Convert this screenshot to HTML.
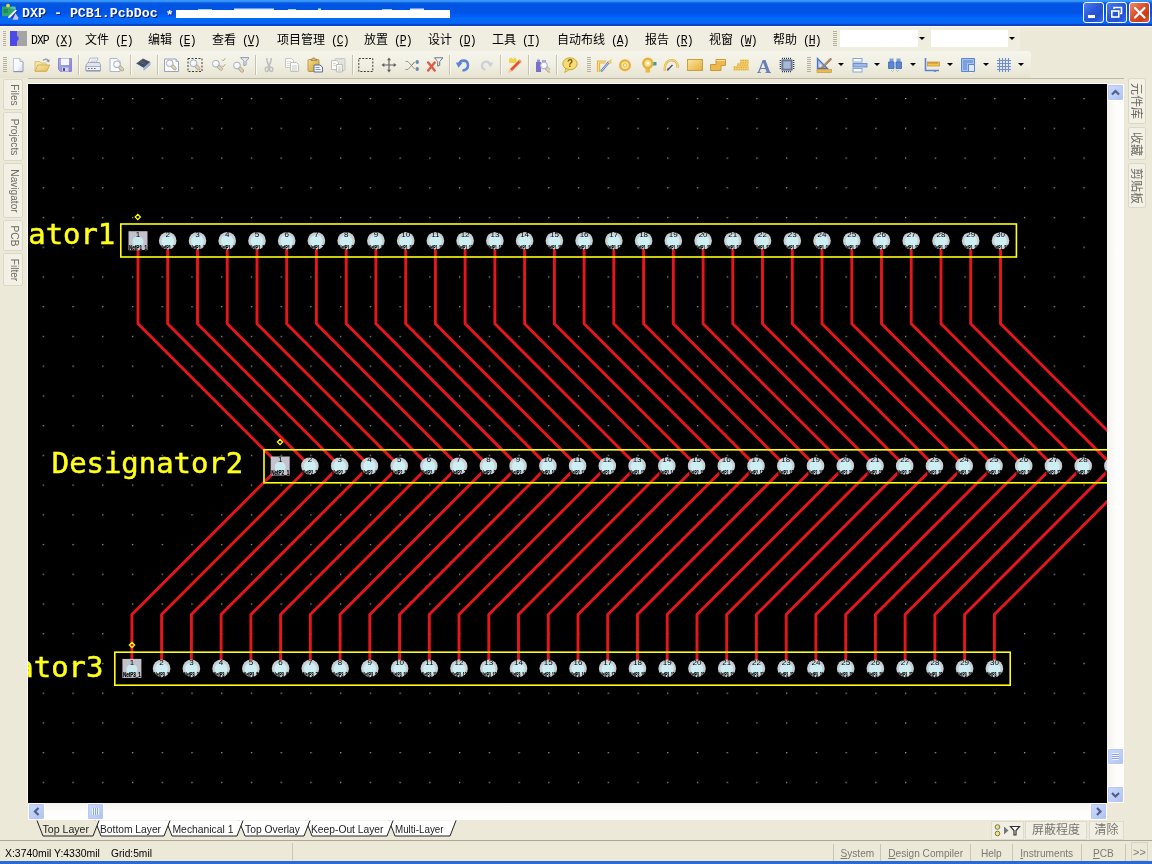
<!DOCTYPE html>
<html lang="zh-CN">
<head>
<meta charset="utf-8">
<title>DXP - PCB1.PcbDoc</title>
<style>
html,body{margin:0;padding:0;}
body{will-change:transform;width:1152px;height:864px;overflow:hidden;background:#ece9d8;position:relative;font-family:"Liberation Sans","Noto Sans CJK SC",sans-serif;font-size:11px;color:#000;}
.abs{position:absolute;}
#title{left:0;top:0;width:1152px;height:26px;background:linear-gradient(180deg,#3c9cff 0,#2f8cf8 1.5px,#0e5fda 2.8px,#0054e3 4.5px,#0055e6 13px,#0060fa 16.5px,#066af8 18.5px,#0467f8 23.3px,#0b46c6 24.5px,#0a3cb8 26px);}
#ttext{left:22px;top:5px;height:18px;line-height:18px;color:#fff;font:bold 13.3px/18px "Liberation Mono","Noto Sans CJK SC",monospace;letter-spacing:0;text-shadow:1px 1px 0 #0a1f6e;white-space:pre;}
#redact{left:176px;top:9.5px;width:274px;height:8.5px;background:#fff;}
.wb{top:2px;width:19px;height:19px;border:1px solid #fff;border-radius:3px;background:linear-gradient(135deg,#4b7ff0 0,#2a59d8 45%,#2350d0 70%,#3a6cf0 100%);}
#wclose{background:linear-gradient(135deg,#ee8a6c 0,#d9502c 45%,#c83c14 75%,#e2633c 100%);}
#menubar{left:0;top:27px;width:1020px;border-radius:0 3px 3px 0;height:24px;background:#f0eee1;}
#tb{left:0;top:51px;width:1031px;border-radius:0 3px 3px 0;height:27px;background:linear-gradient(180deg,#f6f5ec 0,#f1efe2 50%,#e6e3d1 100%);}
.mi{top:33px;height:15px;line-height:15px;font:12px/15px "Liberation Mono","Noto Sans CJK SC",monospace;white-space:pre;color:#000;}
.mi b{font-weight:normal;font-size:11.5px;letter-spacing:-1px;display:inline-block;transform:scaleY(1.14);transform-origin:50% 78%;}
.mi u{text-decoration:underline;}
.grip{width:4px;background:repeating-linear-gradient(180deg,#b4b09c 0,#b4b09c 1px,transparent 1px,transparent 2px);}
.sep{top:55px;width:1px;height:20px;background:#c5c2b0;border-right:1px solid #fbfaf5;}
.ico{top:57px;width:16px;height:16px;}
.dd{top:63px;width:0;height:0;border-left:3px solid transparent;border-right:3px solid transparent;border-top:3px solid #000;}
.combo{top:30px;height:17px;background:#fff;}
.cbtn{top:30px;width:9px;height:17px;background:#efede0;}
.ltab,.rtab{background:#f3f1e6;border:1px solid #dcd8c6;border-radius:2px;color:#6c6a62;}
.vt{position:absolute;left:50%;top:50%;white-space:nowrap;transform:translate(-50%,-50%) rotate(90deg) scaleX(.92);font-size:11px;}
.tx{display:inline-block;transform:scaleX(.92);transform-origin:0 50%;}
.sp .tx{transform-origin:50% 50%;}
.rtab .vt{font-size:12px;transform:translate(-50%,-50%) rotate(90deg);}
#vs{left:1107px;top:84px;width:17px;height:719px;background:linear-gradient(90deg,#f3f1ec 0,#fdfdfb 50%,#fefefe 100%);}
#hs{left:28px;top:803px;width:1079px;height:17px;background:linear-gradient(180deg,#f3f1ec 0,#fdfdfb 50%,#fefefe 100%);}
.sbtn{width:15px;height:15px;border:1px solid #fff;border-radius:2px;background:linear-gradient(135deg,#cbd9fb 0,#bccdf7 60%,#aebff0 100%);box-shadow:0 0 0 1px #b7c8f4 inset;}
#tabs{left:28px;top:820px;}
#status{left:0;top:840px;width:1152px;height:21px;border-top:1px solid #aca899;background:#ece9d8;}
#bline{left:0;top:861px;width:1152px;height:3px;background:#2a6ad8;}
.st{top:846px;height:14px;line-height:14px;font-size:11px;white-space:pre;}
.sp{top:844px;height:17px;line-height:18px;font-size:11px;color:#7b7972;text-align:center;border-left:1px solid #c9c6b6;}
.sp u{text-decoration:underline;}
.bb{top:821px;height:17px;line-height:17px;background:#f1efe4;border:1px solid #dedbca;color:#77756c;font-size:12px;text-align:center;}
#pcb text.pn{font:8px "Liberation Sans",sans-serif;fill:#000;text-anchor:middle;}
#pcb text.nn{font:bold 7px "Liberation Sans",sans-serif;fill:#000;stroke:#000;stroke-width:.2px;text-anchor:middle;}
#pcb .des text{font:28.9px "DejaVu Sans Mono","Liberation Mono",monospace;fill:#ffff1a;stroke:#ffff1a;stroke-width:.5px;}
</style>
</head>
<body>
<svg width="0" height="0" style="position:absolute"><defs><radialGradient id="gl" cx=".4" cy=".35" r=".75"><stop offset="0" stop-color="#ffffff"/><stop offset=".6" stop-color="#f1f3fa"/><stop offset="1" stop-color="#c4cade"/></radialGradient></defs></svg>
<div id="title" class="abs"></div>
<svg class="abs" style="left:0;top:3px" width="20" height="18" viewBox="0 3 20 18"><path d="M2 6.5h13.6v3.5l-6 6.2H2z" fill="#2fa66a"/><rect x="3.5" y="9" width="4.5" height="4" fill="#1f8a58"/><path d="M9 8l4-1.5 2.6 1v2z" fill="#5cc0c8"/><circle cx="8" cy="5.6" r="1.9" fill="#e6d83a"/><path d="M15.6 9.6l1.4 1.2-6.8 7-2.2.4.6-2z" fill="#f4f6fb"/><path d="M16.8 11l.9.8-5.6 6.2-1.3-.6z" fill="#2238a8"/><path d="M15.4 13.3l2.8 4v2.4h-5.6z" fill="#c9c2ea"/></svg>
<div id="ttext" class="abs">DXP - PCB1.PcbDoc <span style="position:relative;top:2px">*</span></div>
<div id="redact" class="abs"></div>
<svg class="abs" style="left:196px;top:8px" width="260" height="3" viewBox="0 0 260 3"><g fill="#fff" fill-opacity=".85"><rect x="2" y="1.2" width="14" height="2"/><rect x="38" y=".5" width="40" height="3"/><rect x="92" y="1.2" width="8" height="2"/><rect x="122" y=".5" width="3" height="3"/><rect x="186" y="1.2" width="10" height="2"/><rect x="214" y=".5" width="14" height="3"/></g></svg>
<div class="abs wb" style="left:1083px"><div class="abs" style="left:4px;top:12px;width:7px;height:3px;background:#fff"></div></div>
<div class="abs wb" style="left:1106px"><svg width="19" height="19" viewBox="0 0 19 19" style="position:absolute;left:0;top:0"><path d="M7 6V4.5h7.5v6H13" fill="none" stroke="#fff" stroke-width="1.6"/><rect x="4.8" y="8" width="7" height="6" fill="none" stroke="#fff" stroke-width="1.6"/></svg></div>
<div id="wclose" class="abs wb" style="left:1129px"><svg width="19" height="19" viewBox="0 0 19 19" style="position:absolute;left:0;top:0"><path d="M5 5l9.5 9.5M14.5 5L5 14.5" stroke="#fff" stroke-width="2.2" stroke-linecap="round"/></svg></div>
<div class="abs" style="left:0;top:26px;width:1152px;height:1px;background:#fbfaf6"></div>
<div id="menubar" class="abs"></div>
<div id="tb" class="abs"></div>
<div class="abs grip" style="left:3px;top:31px;height:15px;width:3px"></div>
<svg class="abs" style="left:10px;top:31px" width="17" height="15" viewBox="0 0 17 15"><rect x="7" y="0" width="10" height="15" fill="#a4a4a4"/><path d="M0 0h7v4.8a3 3 0 0 1 0 5.4V15H0z" fill="#4a4ae6"/></svg>
<div class="abs mi" style="left:31px"><b>DXP (<u>X</u>)</b></div>
<div class="abs mi" style="left:85px">文件<b> (<u>F</u>)</b></div>
<div class="abs mi" style="left:148px">编辑<b> (<u>E</u>)</b></div>
<div class="abs mi" style="left:212px">查看<b> (<u>V</u>)</b></div>
<div class="abs mi" style="left:277px">项目管理<b> (<u>C</u>)</b></div>
<div class="abs mi" style="left:364px">放置<b> (<u>P</u>)</b></div>
<div class="abs mi" style="left:428px">设计<b> (<u>D</u>)</b></div>
<div class="abs mi" style="left:492px">工具<b> (<u>T</u>)</b></div>
<div class="abs mi" style="left:557px">自动布线<b> (<u>A</u>)</b></div>
<div class="abs mi" style="left:645px">报告<b> (<u>R</u>)</b></div>
<div class="abs mi" style="left:709px">视窗<b> (<u>W</u>)</b></div>
<div class="abs mi" style="left:773px">帮助<b> (<u>H</u>)</b></div>
<div class="abs grip" style="left:833px;top:31px;height:15px"></div>
<div class="abs combo" style="left:840px;width:87px"></div><div class="abs cbtn" style="left:918px"></div><div class="abs dd" style="left:919px;top:37px"></div>
<div class="abs combo" style="left:931px;width:86px"></div><div class="abs cbtn" style="left:1008px"></div><div class="abs dd" style="left:1009px;top:37px"></div>
<div class="abs grip" style="left:3px;top:57px;height:15px"></div>
<svg class="abs ico" style="left:10.5px" width="16" height="16" viewBox="0 0 16 16"><defs><linearGradient id="gn" x1="0" y1="0" x2="1" y2="1"><stop offset="0" stop-color="#ffffff"/><stop offset=".6" stop-color="#f4f6fc"/><stop offset="1" stop-color="#c9cfe6"/></linearGradient></defs><path d="M2.5 1.5h6.5l3 3v10h-9.5z" fill="url(#gn)" stroke="#c2c7d8" stroke-width="1"/><path d="M9 1.5v3h3" fill="#e6e9f4" stroke="#aeb4ca" stroke-width="1"/><path d="M2.5 14.6h9.5" stroke="#8d91a6" stroke-width="1.2"/><path d="M12.1 5v9.5" stroke="#aab0c6" stroke-width="1"/></svg>
<svg class="abs ico" style="left:34px" width="16" height="16" viewBox="0 0 16 16"><defs><linearGradient id="go" x1="0" y1="0" x2="1" y2="1"><stop offset="0" stop-color="#f9e9a8"/><stop offset="1" stop-color="#e6bb52"/></linearGradient></defs><path d="M1 4.5h5l1.2 1.5H12v8H1z" fill="#f4e2a6" stroke="#dcc27a" stroke-width="1"/><path d="M1 14.3L3.8 8h12L12.7 14.3z" fill="url(#go)" stroke="#c9a548" stroke-width=".8"/><path d="M9 3.4c2-2 4.5-1.6 5.4.6" fill="none" stroke="#8593b6" stroke-width="1.4"/><path d="M15.8 2.2l-.8 3.4-2.8-1.7z" fill="#8593b6"/></svg>
<svg class="abs ico" style="left:57px" width="16" height="16" viewBox="0 0 16 16"><defs><linearGradient id="gs" x1="0" y1="0" x2="1" y2="1"><stop offset="0" stop-color="#b4b2ec"/><stop offset="1" stop-color="#8482cc"/></linearGradient></defs><path d="M1.5 1.5h13v13h-11l-2-2z" fill="url(#gs)" stroke="#8a88d0" stroke-width="1"/><rect x="4" y="1.5" width="8" height="6.5" fill="#f6f6fd"/><rect x="5" y="10.5" width="6.5" height="4" fill="#d4d4f0"/><rect x="6" y="11.2" width="2" height="2.6" fill="#3c3c70"/></svg>
<div class="abs sep" style="left:78px"></div>
<svg class="abs ico" style="left:84.5px" width="16" height="16" viewBox="0 0 16 16"><path d="M5 1h8l-2 5H3z" fill="#fdfdff" stroke="#a9afc2" stroke-width=".9"/><path d="M6 3h5M5.5 4.5h5" stroke="#b9bfd2" stroke-width=".7"/><path d="M1 8l2-2.5h11.5l1 2.5v5.5H1z" fill="#dfe4f0" stroke="#9aa1b6" stroke-width=".9"/><rect x="1" y="9.5" width="14.5" height="4" fill="#eef1f8" stroke="#9aa1b6" stroke-width=".8"/><path d="M3 11.5h1.5M6 11.5h1.5M9 11.5h1.5" stroke="#5d647a" stroke-width="1.2"/><path d="M1 14h14.5" stroke="#858ba0" stroke-width="1"/></svg>
<svg class="abs ico" style="left:108px" width="16" height="16" viewBox="0 0 16 16"><path d="M2 1.5h7l3 3v10h-10z" fill="#fbfcff" stroke="#aeb4c8" stroke-width="1"/><path d="M11.72 10.02l2.4 2.4" stroke="#a3957a" stroke-width="3.6" stroke-linecap="round"/><path d="M11.72 10.02l2.4 2.4" stroke="#e2d2ae" stroke-width="2.4" stroke-linecap="round"/><circle cx="9" cy="7.3" r="3.4" fill="url(#gl)" stroke="#a9afc2" stroke-width="1"/></svg>
<div class="abs sep" style="left:130px"></div>
<svg class="abs ico" style="left:135px" width="16" height="16" viewBox="0 0 16 16"><path d="M1 6.5l7-5 7.5 3.5-7 6z" fill="#4c5768"/><path d="M3.5 6.3L8 3l5 2.3L8.5 9z" fill="#3a4454"/><path d="M5 5.2l4.5 2.3M6.5 4.2l4.5 2.2" stroke="#7c8798" stroke-width=".6"/><path d="M1 6.5l7.5 4.5v3l-7.5-4.5z" fill="#e2e9f4"/><path d="M8.5 11l7-6v3l-7 6z" fill="#9fb0cc"/></svg>
<div class="abs sep" style="left:157px"></div>
<svg class="abs ico" style="left:164px" width="16" height="16" viewBox="0 0 16 16"><path d="M.5 2h11.5l2.5 2.5v10h-14z" fill="#fbfcff" stroke="#9aa1b8" stroke-width="1"/><path d="M12 2v2.5h2.5" fill="#dfe3f1" stroke="#9aa1b8" stroke-width=".8"/><path d="M8.42 9.02l2.4 2.4" stroke="#a3957a" stroke-width="3.6" stroke-linecap="round"/><path d="M8.42 9.02l2.4 2.4" stroke="#e2d2ae" stroke-width="2.4" stroke-linecap="round"/><circle cx="5.7" cy="6.3" r="3.4" fill="url(#gl)" stroke="#a9afc2" stroke-width="1"/></svg>
<svg class="abs ico" style="left:186.7px" width="16" height="16" viewBox="0 0 16 16"><rect x="1" y="1.5" width="14" height="13" fill="none" stroke="#3a3a3a" stroke-width="1" stroke-dasharray="2 1.5"/><path d="M9.22 9.02l2.4 2.4" stroke="#a3957a" stroke-width="3.6" stroke-linecap="round"/><path d="M9.22 9.02l2.4 2.4" stroke="#e2d2ae" stroke-width="2.4" stroke-linecap="round"/><circle cx="6.5" cy="6.3" r="3.4" fill="url(#gl)" stroke="#a9afc2" stroke-width="1"/></svg>
<svg class="abs ico" style="left:210.8px" width="16" height="16" viewBox="0 0 16 16"><path d="M7.620000000000001 9.42l2.4 2.4" stroke="#a3957a" stroke-width="3.6" stroke-linecap="round"/><path d="M7.620000000000001 9.42l2.4 2.4" stroke="#e2d2ae" stroke-width="2.4" stroke-linecap="round"/><circle cx="4.9" cy="6.7" r="3.4" fill="url(#gl)" stroke="#a9afc2" stroke-width="1"/><path d="M11 2.5l1.2 1.4 2.3-2.8M11 8.5l1.2 1.4 2.3-2.8" fill="none" stroke="#a9ab9c" stroke-width="1"/></svg>
<svg class="abs ico" style="left:233px" width="16" height="16" viewBox="0 0 16 16"><path d="M6.720000000000001 11.22l2.4 2.4" stroke="#a3957a" stroke-width="3.6" stroke-linecap="round"/><path d="M6.720000000000001 11.22l2.4 2.4" stroke="#e2d2ae" stroke-width="2.4" stroke-linecap="round"/><circle cx="4" cy="8.5" r="3.4" fill="url(#gl)" stroke="#a9afc2" stroke-width="1"/><path d="M7.5 .600h9l-3.4 3.6v3.6l-2.2.8v-4.4z" fill="#e4e8f2" stroke="#8a90a4" stroke-width=".9"/></svg>
<div class="abs sep" style="left:255px"></div>
<svg class="abs ico" style="left:260.7px" width="16" height="16" viewBox="0 0 16 16"><path d="M5.8 1c-.3 3 1 6 3.4 9.5M10.2 1c.3 3-1 6-3.4 9.5" stroke="#bcbdbf" stroke-width="1.5" fill="none"/><ellipse cx="5.8" cy="12.3" rx="1.6" ry="2.2" fill="none" stroke="#bcbdbf" stroke-width="1.3"/><ellipse cx="10.2" cy="12.3" rx="1.6" ry="2.2" fill="none" stroke="#bcbdbf" stroke-width="1.3"/></svg>
<svg class="abs ico" style="left:283.5px" width="16" height="16" viewBox="0 0 16 16"><path d="M1.5 1.5h6l2 2v7h-8z" fill="#fbfbf8" stroke="#c6c7c6" stroke-width="1"/><path d="M3 4.5h4M3 6.5h4M3 8.5h3" stroke="#cfd0cc" stroke-width=".8"/><path d="M6.5 5.5h6l2 2v7h-8z" fill="#fbfbf8" stroke="#bfc0be" stroke-width="1"/><path d="M8 9h5M8 11h5M8 13h5" stroke="#c4c5c0" stroke-width=".9"/></svg>
<svg class="abs ico" style="left:307px" width="16" height="16" viewBox="0 0 16 16"><defs><linearGradient id="gp" x1="0" y1="0" x2="1" y2="1"><stop offset="0" stop-color="#f8e08a"/><stop offset="1" stop-color="#c59a3c"/></linearGradient></defs><rect x="1" y="2.5" width="11" height="12" rx="1" fill="url(#gp)" stroke="#b8953e" stroke-width=".9"/><path d="M4 3.5V2h1.5a1.2 1.2 0 0 1 2.4 0H9.5v1.5z" fill="#d9c07a" stroke="#8a7a4a" stroke-width=".7"/><path d="M7 8h6l2.5 2v5H7z" fill="#f3f6fc" stroke="#5f6f8c" stroke-width="1"/><path d="M8.5 10.5h4M8.5 12.5h5" stroke="#7c97cf" stroke-width="1"/></svg>
<svg class="abs ico" style="left:330px" width="16" height="16" viewBox="0 0 16 16"><rect x="5" y="1.5" width="10" height="12" rx="1" fill="#e4e4de" stroke="#c6c6c0" stroke-width="1"/><path d="M8 2.5V1h4v1.5z" fill="#cfcfca"/><path d="M1.5 3.5h5l2 2v7h-7z" fill="#fbfbf8" stroke="#c2c3c0" stroke-width="1"/><path d="M3 6.5h3M3 8.5h3" stroke="#cfd0cc" stroke-width=".8"/><path d="M6.5 7.5h6v7.5h-6z" fill="#fbfbf8" stroke="#bcbdba" stroke-width="1"/><path d="M8 10h3.5M8 12h3.5M8 13.8h3.5" stroke="#c4c5c0" stroke-width=".9"/></svg>
<div class="abs sep" style="left:352px"></div>
<svg class="abs ico" style="left:357.5px" width="16" height="16" viewBox="0 0 16 16"><rect x=".8" y="1.5" width="14" height="13" fill="none" stroke="#3c3c3c" stroke-width="1" stroke-dasharray="2 1.4"/></svg>
<svg class="abs ico" style="left:381px" width="16" height="16" viewBox="0 0 16 16"><path d="M8 2v12M2 8h12" stroke="#5e5e5e" stroke-width="1.1"/><path d="M8 .5l2 2.8h-4zM8 15.5l2-2.8h-4zM.5 8l2.8-2v4zM15.5 8l-2.8-2v4z" fill="#5e5e5e"/></svg>
<svg class="abs ico" style="left:403.5px" width="16" height="16" viewBox="0 0 16 16"><path d="M1.5 4.5h2.5l6.5 7.5M1.5 12.5h2.5l3-3.4" fill="none" stroke="#8f8f8c" stroke-width=".9"/><path d="M7.5 8.4l3-3.4" fill="none" stroke="#6a6a68" stroke-width="1"/><ellipse cx="13.2" cy="5" rx="1.7" ry="2.1" fill="#6a88ac"/><ellipse cx="13.2" cy="12" rx="1.7" ry="2.1" fill="#6a88ac"/></svg>
<svg class="abs ico" style="left:427px" width="16" height="16" viewBox="0 0 16 16"><path d="M1.2 5.5l6.5 8M7.7 5.5l-6.5 8" stroke="#e25a48" stroke-width="2.4" stroke-linecap="round"/><path d="M7.5 .800h8.5l-3.3 3.7v3.8l-2 .9v-4.7z" fill="#f6f8fb" stroke="#5c6a66" stroke-width=".9"/></svg>
<div class="abs sep" style="left:449px"></div>
<svg class="abs ico" style="left:454.5px" width="16" height="16" viewBox="0 0 16 16"><path d="M4 7.5C5 2.5 12.5 2 13 8c.3 3.5-2.5 5.5-5.5 5.5" fill="none" stroke="#5b84d6" stroke-width="2.6"/><path d="M.8 5.5l6.5.5-3.8 4.8z" fill="#5b84d6"/></svg>
<svg class="abs ico" style="left:478px" width="16" height="16" viewBox="0 0 16 16"><path d="M12 7.5C11 3.5 4.5 3.5 4 8.5c-.2 2.5 1.5 4 3.5 4" fill="none" stroke="#cdd0d6" stroke-width="2.4"/><path d="M15.2 5.5l-6 .5 3.6 4.5z" fill="#cdd0d6"/></svg>
<div class="abs sep" style="left:500px"></div>
<svg class="abs ico" style="left:506px" width="16" height="16" viewBox="0 0 16 16"><path d="M3 2l2-1.5L7 2l2-1.5L10.5 2v4h-7.5z" fill="#f1d44c"/><path d="M13.5 2.5l2 2L6 14l-3.5 1.5L4 12z" fill="#e8522e"/><path d="M13.5 2.5l2 2-1.2 1.2-2-2z" fill="#f2a43c"/><path d="M2.5 15.5L4 12l2 2z" fill="#f5d7a0"/></svg>
<div class="abs sep" style="left:528px"></div>
<svg class="abs ico" style="left:533.5px" width="16" height="16" viewBox="0 0 16 16"><path d="M2 5h5v10H2z" fill="#7a6fd0"/><path d="M3 2.5h3V5H3z" fill="#9a90e0"/><path d="M8 3h4v4H8z" fill="#a9a2e6"/><path d="M12.72 11.22l2.4 2.4" stroke="#a3957a" stroke-width="3.6" stroke-linecap="round"/><path d="M12.72 11.22l2.4 2.4" stroke="#e2d2ae" stroke-width="2.4" stroke-linecap="round"/><circle cx="10" cy="8.5" r="3.4" fill="url(#gl)" stroke="#a9afc2" stroke-width="1"/></svg>
<div class="abs sep" style="left:556px"></div>
<svg class="abs ico" style="left:561.5px" width="16" height="16" viewBox="0 0 16 16"><ellipse cx="8" cy="6.8" rx="7.2" ry="6" fill="#f6dc72" stroke="#c9a437" stroke-width="1"/><path d="M4 11.5l-1.5 4 5-3z" fill="#f6dc72" stroke="#c9a437" stroke-width=".8"/><text x="8" y="10.3" font-family="Liberation Sans,sans-serif" font-size="10" font-weight="bold" fill="#7a5a10" text-anchor="middle">?</text></svg>
<div class="abs grip" style="left:587px;top:57px;height:15px"></div>
<svg class="abs ico" style="left:595.5px" width="16" height="16" viewBox="0 0 16 16"><path d="M2.5 15V5h7" fill="none" stroke="#e8b53e" stroke-width="3.2"/><path d="M2.5 15V5h7" fill="none" stroke="#f9e290" stroke-width="1"/><path d="M5 14.5L13 5" stroke="#5a76b0" stroke-width="2.2"/><path d="M5 14.5L13 5" stroke="#c4d8f6" stroke-width="1"/><path d="M15.5 1.5c-2.5 1.5-3 3.5-2 5.5l2-.5z" fill="#f0cc58"/></svg>
<svg class="abs ico" style="left:617px" width="16" height="16" viewBox="0 0 16 16"><circle cx="8" cy="8.3" r="4.9" fill="#f9e290" stroke="#e6b23c" stroke-width="2.2"/><circle cx="8" cy="8.3" r="1.6" fill="#fdf6dc" stroke="#e0aa38" stroke-width=".8"/></svg>
<svg class="abs ico" style="left:640.5px" width="16" height="16" viewBox="0 0 16 16"><path d="M8 5h7.5v3.5H8z" fill="#3f9aa8"/><path d="M4.5 9h4.5v6.5h-4.5z" fill="#e9b848"/><circle cx="6.8" cy="6.3" r="4.6" fill="#f9e290" stroke="#e6b23c" stroke-width="2.4"/><circle cx="6.8" cy="6.3" r="1.4" fill="#fff"/></svg>
<svg class="abs ico" style="left:663px" width="16" height="16" viewBox="0 0 16 16"><path d="M2 14C.800 7 5 2.8 9.5 3.2c4 .5 5.5 4.3 5 7.8" fill="none" stroke="#e2b040" stroke-width="2.4"/><path d="M2 14C.800 7 5 2.8 9.5 3.2c4 .5 5.5 4.3 5 7.8" fill="none" stroke="#f9e6a6" stroke-width=".9"/><path d="M9.5 8L5 12.5" stroke="#3c4c6c" stroke-width="1.2"/><path d="M3.8 13.8l.7-2.6 1.9 1.9z" fill="#3c4c6c"/></svg>
<svg class="abs ico" style="left:686.5px" width="16" height="16" viewBox="0 0 16 16"><defs><linearGradient id="gf" x1="0" y1="0" x2="1" y2="1"><stop offset="0" stop-color="#fbe6a0"/><stop offset="1" stop-color="#e6ae3a"/></linearGradient></defs><rect x=".500" y="2.5" width="15" height="11" fill="url(#gf)" stroke="#c9a040" stroke-width="1"/></svg>
<svg class="abs ico" style="left:709.5px" width="16" height="16" viewBox="0 0 16 16"><path d="M6 2.5h9.5v6H11v5H.500v-6H6z" fill="#ecb94a" stroke="#c9983a" stroke-width="1"/><path d="M6.5 3.5h8.5" stroke="#fde6a8" stroke-width="1"/></svg>
<svg class="abs ico" style="left:733px" width="16" height="16" viewBox="0 0 16 16"><path d="M7 2.5h8.5v11H.500V9H4V6h3z" fill="#f2cc66"/><g stroke="#c9993a" stroke-width=".9" stroke-dasharray="1 1.3"><path d="M7.5 3.5h8M7.5 5.8h8M4.5 8.1h11M1 10.4h14.5M1 12.7h14.5"/></g></svg>
<svg class="abs ico" style="left:755.5px" width="16" height="16" viewBox="0 0 16 16"><text x="8" y="15.5" font-family="Liberation Serif,serif" font-size="19.5" font-weight="bold" fill="#6480b6" text-anchor="middle">A</text></svg>
<svg class="abs ico" style="left:779px" width="16" height="16" viewBox="0 0 16 16"><rect x="3" y="3" width="10" height="10" fill="#7f93b8" stroke="#4a587a" stroke-width="1"/><rect x="4.5" y="4.5" width="7" height="7" fill="#a9b8d4"/><g stroke="#2e3446" stroke-width="1.3" stroke-dasharray="1 1"><path d="M3 1.3h10M3 14.7h10M1.3 3v10M14.7 3v10"/></g></svg>
<div class="abs grip" style="left:807px;top:57px;height:15px"></div>
<svg class="abs ico" style="left:815.5px" width="16" height="16" viewBox="0 0 16 16"><path d="M1.5 1.5v10h10z" fill="#a9c3ef" stroke="#4a74c4" stroke-width="1.3"/><path d="M3.5 6.5v3h3z" fill="#f2f5fb"/><path d="M14.5 1l1.3 1.3L7 11l-2 .8.8-2z" fill="#b88a66" stroke="#8a6a50" stroke-width=".6"/><rect x="1" y="12.5" width="14.5" height="3" fill="#ecb94a" stroke="#c9983a" stroke-width=".7"/></svg>
<div class="abs dd" style="left:838px"></div>
<svg class="abs ico" style="left:851.5px" width="16" height="16" viewBox="0 0 16 16"><rect x="1" y="1.5" width="9" height="3.5" fill="#f7f9fd" stroke="#8aa4d6" stroke-width="1"/><rect x="1" y="6.5" width="14" height="3.5" fill="#9fb9ea" stroke="#6d8fd0" stroke-width="1"/><rect x="1" y="11.5" width="9" height="3.5" fill="#f7f9fd" stroke="#8aa4d6" stroke-width="1"/></svg>
<div class="abs dd" style="left:874px"></div>
<svg class="abs ico" style="left:887px" width="16" height="16" viewBox="0 0 16 16"><path d="M2.5 1.5h4v4h-4zM9.5 1.5h4v4h-4z" fill="#7d9fdc"/><path d="M1.5 5h5.5v6.5H1.5zM9 5h5.5v6.5H9z" fill="#5e86d0" stroke="#3f66b4" stroke-width=".8"/><rect x="7" y="5.5" width="2" height="3" fill="#9db7e6"/><path d="M4 13l1.5 1.5L7 13M9 13l1.5 1.5L12 13" fill="none" stroke="#b9b9ae" stroke-width=".9"/></svg>
<div class="abs dd" style="left:910px"></div>
<svg class="abs ico" style="left:924px" width="16" height="16" viewBox="0 0 16 16"><path d="M1.5 1v12.5H15" fill="none" stroke="#5b84d6" stroke-width="1.6"/><rect x="3.5" y="5" width="12" height="4" fill="#f0c452" stroke="#c9983a" stroke-width=".8"/><path d="M5 5v2M7 5v2M9 5v2M11 5v2M13 5v2" stroke="#9a6a20" stroke-width=".6"/><path d="M9.5 15l1.5-1.5 1.5 1.5" fill="#8a8a80"/></svg>
<div class="abs dd" style="left:947px"></div>
<svg class="abs ico" style="left:959.5px" width="16" height="16" viewBox="0 0 16 16"><path d="M1.5 1.5h13v6h-6v7h-7z" fill="#a9c3ef" stroke="#5b84d6" stroke-width="1"/><path d="M8.5 7.5h6v7h-6z" fill="#dfe9fa" stroke="#5b84d6" stroke-width="1"/><path d="M3 3h10v3H7v7H3z" fill="#7c9fe0"/><path d="M9.5 15l1.5 1 1.5-1" fill="#fff"/></svg>
<div class="abs dd" style="left:983px"></div>
<svg class="abs ico" style="left:995.5px" width="16" height="16" viewBox="0 0 16 16"><g stroke="#6d8ed2" stroke-width="1.1"><path d="M3.5 1v14M6.5 1v14M9.5 1v14M12.5 1v14M1 3.5h14M1 6.5h14M1 9.5h14M1 12.5h14"/></g></svg>
<div class="abs dd" style="left:1018px"></div>
<div class="abs" style="left:28px;top:78px;width:1096px;height:1px;background:#bdb9a6"></div>
<div class="abs ltab" style="left:3px;top:79px;width:18px;height:29px"><span class="vt" style="left:62%">Files</span></div>
<div class="abs ltab" style="left:3px;top:112px;width:18px;height:47px"><span class="vt" style="left:62%">Projects</span></div>
<div class="abs ltab" style="left:3px;top:163px;width:18px;height:53px"><span class="vt" style="left:62%">Navigator</span></div>
<div class="abs ltab" style="left:3px;top:220px;width:18px;height:29px"><span class="vt" style="left:62%">PCB</span></div>
<div class="abs ltab" style="left:3px;top:253px;width:18px;height:31px"><span class="vt" style="left:62%">Filter</span></div>
<div class="abs rtab" style="left:1128px;top:78px;width:16px;height:44px"><span class="vt">元件库</span></div>
<div class="abs rtab" style="left:1128px;top:127px;width:16px;height:31px"><span class="vt">收藏</span></div>
<div class="abs rtab" style="left:1128px;top:163px;width:16px;height:43px"><span class="vt">剪贴板</span></div>
<div class="abs" style="left:27px;top:83px;width:1081px;height:1px;background:#fbfaf4"></div><div class="abs" style="left:27px;top:83px;width:1px;height:720px;background:#fbfaf4"></div>
<div class="abs" style="left:28px;top:84px;width:1079px;height:719px;overflow:hidden;background:#000">
<svg id="pcb" width="1079" height="719" viewBox="28 84 1079 719">
<defs><pattern id="gd" x="131.9" y="216.9" width="29.735" height="29.73" patternUnits="userSpaceOnUse"><rect x="0" y="0" width="1.3" height="1.3" fill="#989898"/></pattern></defs>
<rect x="28" y="84" width="1079" height="719" fill="#000"/>
<rect x="28" y="84" width="1079" height="719" fill="url(#gd)"/>
<g fill="none" stroke="#e6161a" stroke-width="2.9" stroke-linejoin="round" stroke-linecap="round">
<path d="M138 240.7V323.8L280.2 466M167.7 240.7V323.8L309.9 466M197.5 240.7V323.8L339.7 466M227.2 240.7V323.8L369.4 466M257 240.7V323.8L399.2 466M286.7 240.7V323.8L428.9 466M316.4 240.7V323.8L458.6 466M346.2 240.7V323.8L488.4 466M375.9 240.7V323.8L518.1 466M405.7 240.7V323.8L547.9 466M435.4 240.7V323.8L577.6 466M465.1 240.7V323.8L607.3 466M494.9 240.7V323.8L637.1 466M524.6 240.7V323.8L666.8 466M554.4 240.7V323.8L696.6 466M584.1 240.7V323.8L726.3 466M613.8 240.7V323.8L756 466M643.6 240.7V323.8L785.8 466M673.3 240.7V323.8L815.5 466M703.1 240.7V323.8L845.3 466M732.8 240.7V323.8L875 466M762.5 240.7V323.8L904.7 466M792.3 240.7V323.8L934.5 466M822 240.7V323.8L964.2 466M851.8 240.7V323.8L994 466M881.5 240.7V323.8L1023.7 466M911.2 240.7V323.8L1053.4 466M941 240.7V323.8L1083.2 466M970.7 240.7V323.8L1112.9 466M1000.5 240.7V323.8L1142.7 466"/>
<path d="M131.9 668.4V614.6L280.2 466M161.6 668.4V614.6L309.9 466M191.4 668.4V614.6L339.7 466M221.1 668.4V614.6L369.4 466M250.9 668.4V614.6L399.2 466M280.6 668.4V614.6L428.9 466M310.3 668.4V614.6L458.6 466M340.1 668.4V614.6L488.4 466M369.8 668.4V614.6L518.1 466M399.6 668.4V614.6L547.9 466M429.3 668.4V614.6L577.6 466M459 668.4V614.6L607.3 466M488.8 668.4V614.6L637.1 466M518.5 668.4V614.6L666.8 466M548.3 668.4V614.6L696.6 466M578 668.4V614.6L726.3 466M607.7 668.4V614.6L756 466M637.5 668.4V614.6L785.8 466M667.2 668.4V614.6L815.5 466M697 668.4V614.6L845.3 466M726.7 668.4V614.6L875 466M756.4 668.4V614.6L904.7 466M786.2 668.4V614.6L934.5 466M815.9 668.4V614.6L964.2 466M845.7 668.4V614.6L994 466M875.4 668.4V614.6L1023.7 466M905.1 668.4V614.6L1053.4 466M934.9 668.4V614.6L1083.2 466M964.6 668.4V614.6L1112.9 466M994.4 668.4V614.6L1142.7 466"/>
</g>
<g fill="none" stroke="#ffff10" stroke-width="1.6">
<rect x="120.8" y="224" width="895.6" height="33"/>
<rect x="264" y="449.8" width="895" height="33"/>
<rect x="114.8" y="652.2" width="895.4" height="33"/>
</g>
<path d="M137.8 214.4l2.6 2.6l-2.6 2.6l-2.6-2.6z" fill="none" stroke="#ffff00" stroke-width="1.3"/>
<path d="M280 439.4l2.6 2.6l-2.6 2.6l-2.6-2.6z" fill="none" stroke="#ffff00" stroke-width="1.3"/>
<path d="M132 642.4l2.6 2.6l-2.6 2.6l-2.6-2.6z" fill="none" stroke="#ffff00" stroke-width="1.3"/>
<g>
<rect x="128.5" y="231.2" width="19" height="19" fill="#c3c1cb"/><circle cx="138" cy="241.7" r="5.5" fill="#c8e9ee"/><text x="138" y="236.9" class="pn">1</text><text x="138" y="249.7" class="nn" textLength="18" lengthAdjust="spacingAndGlyphs">NetP1_1</text>
<circle cx="167.7" cy="240.7" r="8.8" fill="#c9d0d5"/><circle cx="167.7" cy="241.2" r="6.2" fill="#cdeef2"/><text x="167.7" y="236.9" class="pn">2</text><text x="167.7" y="249.7" class="nn" textLength="15" lengthAdjust="spacingAndGlyphs">NetP1_2</text>
<circle cx="197.5" cy="240.7" r="8.8" fill="#c9d0d5"/><circle cx="197.5" cy="241.2" r="6.2" fill="#cdeef2"/><text x="197.5" y="236.9" class="pn">3</text><text x="197.5" y="249.7" class="nn" textLength="15" lengthAdjust="spacingAndGlyphs">NetP1_3</text>
<circle cx="227.2" cy="240.7" r="8.8" fill="#c9d0d5"/><circle cx="227.2" cy="241.2" r="6.2" fill="#cdeef2"/><text x="227.2" y="236.9" class="pn">4</text><text x="227.2" y="249.7" class="nn" textLength="15" lengthAdjust="spacingAndGlyphs">NetP1_4</text>
<circle cx="257" cy="240.7" r="8.8" fill="#c9d0d5"/><circle cx="257" cy="241.2" r="6.2" fill="#cdeef2"/><text x="257" y="236.9" class="pn">5</text><text x="257" y="249.7" class="nn" textLength="15" lengthAdjust="spacingAndGlyphs">NetP1_5</text>
<circle cx="286.7" cy="240.7" r="8.8" fill="#c9d0d5"/><circle cx="286.7" cy="241.2" r="6.2" fill="#cdeef2"/><text x="286.7" y="236.9" class="pn">6</text><text x="286.7" y="249.7" class="nn" textLength="15" lengthAdjust="spacingAndGlyphs">NetP1_6</text>
<circle cx="316.4" cy="240.7" r="8.8" fill="#c9d0d5"/><circle cx="316.4" cy="241.2" r="6.2" fill="#cdeef2"/><text x="316.4" y="236.9" class="pn">7</text><text x="316.4" y="249.7" class="nn" textLength="15" lengthAdjust="spacingAndGlyphs">NetP1_7</text>
<circle cx="346.2" cy="240.7" r="8.8" fill="#c9d0d5"/><circle cx="346.2" cy="241.2" r="6.2" fill="#cdeef2"/><text x="346.2" y="236.9" class="pn">8</text><text x="346.2" y="249.7" class="nn" textLength="15" lengthAdjust="spacingAndGlyphs">NetP1_8</text>
<circle cx="375.9" cy="240.7" r="8.8" fill="#c9d0d5"/><circle cx="375.9" cy="241.2" r="6.2" fill="#cdeef2"/><text x="375.9" y="236.9" class="pn">9</text><text x="375.9" y="249.7" class="nn" textLength="15" lengthAdjust="spacingAndGlyphs">NetP1_9</text>
<circle cx="405.7" cy="240.7" r="8.8" fill="#c9d0d5"/><circle cx="405.7" cy="241.2" r="6.2" fill="#cdeef2"/><text x="405.7" y="236.9" class="pn">10</text><text x="405.7" y="249.7" class="nn" textLength="15" lengthAdjust="spacingAndGlyphs">NetP1_10</text>
<circle cx="435.4" cy="240.7" r="8.8" fill="#c9d0d5"/><circle cx="435.4" cy="241.2" r="6.2" fill="#cdeef2"/><text x="435.4" y="236.9" class="pn">11</text><text x="435.4" y="249.7" class="nn" textLength="15" lengthAdjust="spacingAndGlyphs">NetP1_11</text>
<circle cx="465.1" cy="240.7" r="8.8" fill="#c9d0d5"/><circle cx="465.1" cy="241.2" r="6.2" fill="#cdeef2"/><text x="465.1" y="236.9" class="pn">12</text><text x="465.1" y="249.7" class="nn" textLength="15" lengthAdjust="spacingAndGlyphs">NetP1_12</text>
<circle cx="494.9" cy="240.7" r="8.8" fill="#c9d0d5"/><circle cx="494.9" cy="241.2" r="6.2" fill="#cdeef2"/><text x="494.9" y="236.9" class="pn">13</text><text x="494.9" y="249.7" class="nn" textLength="15" lengthAdjust="spacingAndGlyphs">NetP1_13</text>
<circle cx="524.6" cy="240.7" r="8.8" fill="#c9d0d5"/><circle cx="524.6" cy="241.2" r="6.2" fill="#cdeef2"/><text x="524.6" y="236.9" class="pn">14</text><text x="524.6" y="249.7" class="nn" textLength="15" lengthAdjust="spacingAndGlyphs">NetP1_14</text>
<circle cx="554.4" cy="240.7" r="8.8" fill="#c9d0d5"/><circle cx="554.4" cy="241.2" r="6.2" fill="#cdeef2"/><text x="554.4" y="236.9" class="pn">15</text><text x="554.4" y="249.7" class="nn" textLength="15" lengthAdjust="spacingAndGlyphs">NetP1_15</text>
<circle cx="584.1" cy="240.7" r="8.8" fill="#c9d0d5"/><circle cx="584.1" cy="241.2" r="6.2" fill="#cdeef2"/><text x="584.1" y="236.9" class="pn">16</text><text x="584.1" y="249.7" class="nn" textLength="15" lengthAdjust="spacingAndGlyphs">NetP1_16</text>
<circle cx="613.8" cy="240.7" r="8.8" fill="#c9d0d5"/><circle cx="613.8" cy="241.2" r="6.2" fill="#cdeef2"/><text x="613.8" y="236.9" class="pn">17</text><text x="613.8" y="249.7" class="nn" textLength="15" lengthAdjust="spacingAndGlyphs">NetP1_17</text>
<circle cx="643.6" cy="240.7" r="8.8" fill="#c9d0d5"/><circle cx="643.6" cy="241.2" r="6.2" fill="#cdeef2"/><text x="643.6" y="236.9" class="pn">18</text><text x="643.6" y="249.7" class="nn" textLength="15" lengthAdjust="spacingAndGlyphs">NetP1_18</text>
<circle cx="673.3" cy="240.7" r="8.8" fill="#c9d0d5"/><circle cx="673.3" cy="241.2" r="6.2" fill="#cdeef2"/><text x="673.3" y="236.9" class="pn">19</text><text x="673.3" y="249.7" class="nn" textLength="15" lengthAdjust="spacingAndGlyphs">NetP1_19</text>
<circle cx="703.1" cy="240.7" r="8.8" fill="#c9d0d5"/><circle cx="703.1" cy="241.2" r="6.2" fill="#cdeef2"/><text x="703.1" y="236.9" class="pn">20</text><text x="703.1" y="249.7" class="nn" textLength="15" lengthAdjust="spacingAndGlyphs">NetP1_20</text>
<circle cx="732.8" cy="240.7" r="8.8" fill="#c9d0d5"/><circle cx="732.8" cy="241.2" r="6.2" fill="#cdeef2"/><text x="732.8" y="236.9" class="pn">21</text><text x="732.8" y="249.7" class="nn" textLength="15" lengthAdjust="spacingAndGlyphs">NetP1_21</text>
<circle cx="762.5" cy="240.7" r="8.8" fill="#c9d0d5"/><circle cx="762.5" cy="241.2" r="6.2" fill="#cdeef2"/><text x="762.5" y="236.9" class="pn">22</text><text x="762.5" y="249.7" class="nn" textLength="15" lengthAdjust="spacingAndGlyphs">NetP1_22</text>
<circle cx="792.3" cy="240.7" r="8.8" fill="#c9d0d5"/><circle cx="792.3" cy="241.2" r="6.2" fill="#cdeef2"/><text x="792.3" y="236.9" class="pn">23</text><text x="792.3" y="249.7" class="nn" textLength="15" lengthAdjust="spacingAndGlyphs">NetP1_23</text>
<circle cx="822" cy="240.7" r="8.8" fill="#c9d0d5"/><circle cx="822" cy="241.2" r="6.2" fill="#cdeef2"/><text x="822" y="236.9" class="pn">24</text><text x="822" y="249.7" class="nn" textLength="15" lengthAdjust="spacingAndGlyphs">NetP1_24</text>
<circle cx="851.8" cy="240.7" r="8.8" fill="#c9d0d5"/><circle cx="851.8" cy="241.2" r="6.2" fill="#cdeef2"/><text x="851.8" y="236.9" class="pn">25</text><text x="851.8" y="249.7" class="nn" textLength="15" lengthAdjust="spacingAndGlyphs">NetP1_25</text>
<circle cx="881.5" cy="240.7" r="8.8" fill="#c9d0d5"/><circle cx="881.5" cy="241.2" r="6.2" fill="#cdeef2"/><text x="881.5" y="236.9" class="pn">26</text><text x="881.5" y="249.7" class="nn" textLength="15" lengthAdjust="spacingAndGlyphs">NetP1_26</text>
<circle cx="911.2" cy="240.7" r="8.8" fill="#c9d0d5"/><circle cx="911.2" cy="241.2" r="6.2" fill="#cdeef2"/><text x="911.2" y="236.9" class="pn">27</text><text x="911.2" y="249.7" class="nn" textLength="15" lengthAdjust="spacingAndGlyphs">NetP1_27</text>
<circle cx="941" cy="240.7" r="8.8" fill="#c9d0d5"/><circle cx="941" cy="241.2" r="6.2" fill="#cdeef2"/><text x="941" y="236.9" class="pn">28</text><text x="941" y="249.7" class="nn" textLength="15" lengthAdjust="spacingAndGlyphs">NetP1_28</text>
<circle cx="970.7" cy="240.7" r="8.8" fill="#c9d0d5"/><circle cx="970.7" cy="241.2" r="6.2" fill="#cdeef2"/><text x="970.7" y="236.9" class="pn">29</text><text x="970.7" y="249.7" class="nn" textLength="15" lengthAdjust="spacingAndGlyphs">NetP1_29</text>
<circle cx="1000.5" cy="240.7" r="8.8" fill="#c9d0d5"/><circle cx="1000.5" cy="241.2" r="6.2" fill="#cdeef2"/><text x="1000.5" y="236.9" class="pn">30</text><text x="1000.5" y="249.7" class="nn" textLength="15" lengthAdjust="spacingAndGlyphs">NetP1_30</text>
<rect x="270.7" y="456.5" width="19" height="19" fill="#c3c1cb"/><circle cx="280.2" cy="467" r="5.5" fill="#c8e9ee"/><text x="280.2" y="462.2" class="pn">1</text><text x="280.2" y="475" class="nn" textLength="18" lengthAdjust="spacingAndGlyphs">NetP2_1</text>
<circle cx="309.9" cy="466" r="8.8" fill="#c9d0d5"/><circle cx="309.9" cy="466.5" r="6.2" fill="#cdeef2"/><text x="309.9" y="462.2" class="pn">2</text><text x="309.9" y="475" class="nn" textLength="15" lengthAdjust="spacingAndGlyphs">NetP2_2</text>
<circle cx="339.7" cy="466" r="8.8" fill="#c9d0d5"/><circle cx="339.7" cy="466.5" r="6.2" fill="#cdeef2"/><text x="339.7" y="462.2" class="pn">3</text><text x="339.7" y="475" class="nn" textLength="15" lengthAdjust="spacingAndGlyphs">NetP2_3</text>
<circle cx="369.4" cy="466" r="8.8" fill="#c9d0d5"/><circle cx="369.4" cy="466.5" r="6.2" fill="#cdeef2"/><text x="369.4" y="462.2" class="pn">4</text><text x="369.4" y="475" class="nn" textLength="15" lengthAdjust="spacingAndGlyphs">NetP2_4</text>
<circle cx="399.2" cy="466" r="8.8" fill="#c9d0d5"/><circle cx="399.2" cy="466.5" r="6.2" fill="#cdeef2"/><text x="399.2" y="462.2" class="pn">5</text><text x="399.2" y="475" class="nn" textLength="15" lengthAdjust="spacingAndGlyphs">NetP2_5</text>
<circle cx="428.9" cy="466" r="8.8" fill="#c9d0d5"/><circle cx="428.9" cy="466.5" r="6.2" fill="#cdeef2"/><text x="428.9" y="462.2" class="pn">6</text><text x="428.9" y="475" class="nn" textLength="15" lengthAdjust="spacingAndGlyphs">NetP2_6</text>
<circle cx="458.6" cy="466" r="8.8" fill="#c9d0d5"/><circle cx="458.6" cy="466.5" r="6.2" fill="#cdeef2"/><text x="458.6" y="462.2" class="pn">7</text><text x="458.6" y="475" class="nn" textLength="15" lengthAdjust="spacingAndGlyphs">NetP2_7</text>
<circle cx="488.4" cy="466" r="8.8" fill="#c9d0d5"/><circle cx="488.4" cy="466.5" r="6.2" fill="#cdeef2"/><text x="488.4" y="462.2" class="pn">8</text><text x="488.4" y="475" class="nn" textLength="15" lengthAdjust="spacingAndGlyphs">NetP2_8</text>
<circle cx="518.1" cy="466" r="8.8" fill="#c9d0d5"/><circle cx="518.1" cy="466.5" r="6.2" fill="#cdeef2"/><text x="518.1" y="462.2" class="pn">9</text><text x="518.1" y="475" class="nn" textLength="15" lengthAdjust="spacingAndGlyphs">NetP2_9</text>
<circle cx="547.9" cy="466" r="8.8" fill="#c9d0d5"/><circle cx="547.9" cy="466.5" r="6.2" fill="#cdeef2"/><text x="547.9" y="462.2" class="pn">10</text><text x="547.9" y="475" class="nn" textLength="15" lengthAdjust="spacingAndGlyphs">NetP2_10</text>
<circle cx="577.6" cy="466" r="8.8" fill="#c9d0d5"/><circle cx="577.6" cy="466.5" r="6.2" fill="#cdeef2"/><text x="577.6" y="462.2" class="pn">11</text><text x="577.6" y="475" class="nn" textLength="15" lengthAdjust="spacingAndGlyphs">NetP2_11</text>
<circle cx="607.3" cy="466" r="8.8" fill="#c9d0d5"/><circle cx="607.3" cy="466.5" r="6.2" fill="#cdeef2"/><text x="607.3" y="462.2" class="pn">12</text><text x="607.3" y="475" class="nn" textLength="15" lengthAdjust="spacingAndGlyphs">NetP2_12</text>
<circle cx="637.1" cy="466" r="8.8" fill="#c9d0d5"/><circle cx="637.1" cy="466.5" r="6.2" fill="#cdeef2"/><text x="637.1" y="462.2" class="pn">13</text><text x="637.1" y="475" class="nn" textLength="15" lengthAdjust="spacingAndGlyphs">NetP2_13</text>
<circle cx="666.8" cy="466" r="8.8" fill="#c9d0d5"/><circle cx="666.8" cy="466.5" r="6.2" fill="#cdeef2"/><text x="666.8" y="462.2" class="pn">14</text><text x="666.8" y="475" class="nn" textLength="15" lengthAdjust="spacingAndGlyphs">NetP2_14</text>
<circle cx="696.6" cy="466" r="8.8" fill="#c9d0d5"/><circle cx="696.6" cy="466.5" r="6.2" fill="#cdeef2"/><text x="696.6" y="462.2" class="pn">15</text><text x="696.6" y="475" class="nn" textLength="15" lengthAdjust="spacingAndGlyphs">NetP2_15</text>
<circle cx="726.3" cy="466" r="8.8" fill="#c9d0d5"/><circle cx="726.3" cy="466.5" r="6.2" fill="#cdeef2"/><text x="726.3" y="462.2" class="pn">16</text><text x="726.3" y="475" class="nn" textLength="15" lengthAdjust="spacingAndGlyphs">NetP2_16</text>
<circle cx="756" cy="466" r="8.8" fill="#c9d0d5"/><circle cx="756" cy="466.5" r="6.2" fill="#cdeef2"/><text x="756" y="462.2" class="pn">17</text><text x="756" y="475" class="nn" textLength="15" lengthAdjust="spacingAndGlyphs">NetP2_17</text>
<circle cx="785.8" cy="466" r="8.8" fill="#c9d0d5"/><circle cx="785.8" cy="466.5" r="6.2" fill="#cdeef2"/><text x="785.8" y="462.2" class="pn">18</text><text x="785.8" y="475" class="nn" textLength="15" lengthAdjust="spacingAndGlyphs">NetP2_18</text>
<circle cx="815.5" cy="466" r="8.8" fill="#c9d0d5"/><circle cx="815.5" cy="466.5" r="6.2" fill="#cdeef2"/><text x="815.5" y="462.2" class="pn">19</text><text x="815.5" y="475" class="nn" textLength="15" lengthAdjust="spacingAndGlyphs">NetP2_19</text>
<circle cx="845.3" cy="466" r="8.8" fill="#c9d0d5"/><circle cx="845.3" cy="466.5" r="6.2" fill="#cdeef2"/><text x="845.3" y="462.2" class="pn">20</text><text x="845.3" y="475" class="nn" textLength="15" lengthAdjust="spacingAndGlyphs">NetP2_20</text>
<circle cx="875" cy="466" r="8.8" fill="#c9d0d5"/><circle cx="875" cy="466.5" r="6.2" fill="#cdeef2"/><text x="875" y="462.2" class="pn">21</text><text x="875" y="475" class="nn" textLength="15" lengthAdjust="spacingAndGlyphs">NetP2_21</text>
<circle cx="904.7" cy="466" r="8.8" fill="#c9d0d5"/><circle cx="904.7" cy="466.5" r="6.2" fill="#cdeef2"/><text x="904.7" y="462.2" class="pn">22</text><text x="904.7" y="475" class="nn" textLength="15" lengthAdjust="spacingAndGlyphs">NetP2_22</text>
<circle cx="934.5" cy="466" r="8.8" fill="#c9d0d5"/><circle cx="934.5" cy="466.5" r="6.2" fill="#cdeef2"/><text x="934.5" y="462.2" class="pn">23</text><text x="934.5" y="475" class="nn" textLength="15" lengthAdjust="spacingAndGlyphs">NetP2_23</text>
<circle cx="964.2" cy="466" r="8.8" fill="#c9d0d5"/><circle cx="964.2" cy="466.5" r="6.2" fill="#cdeef2"/><text x="964.2" y="462.2" class="pn">24</text><text x="964.2" y="475" class="nn" textLength="15" lengthAdjust="spacingAndGlyphs">NetP2_24</text>
<circle cx="994" cy="466" r="8.8" fill="#c9d0d5"/><circle cx="994" cy="466.5" r="6.2" fill="#cdeef2"/><text x="994" y="462.2" class="pn">25</text><text x="994" y="475" class="nn" textLength="15" lengthAdjust="spacingAndGlyphs">NetP2_25</text>
<circle cx="1023.7" cy="466" r="8.8" fill="#c9d0d5"/><circle cx="1023.7" cy="466.5" r="6.2" fill="#cdeef2"/><text x="1023.7" y="462.2" class="pn">26</text><text x="1023.7" y="475" class="nn" textLength="15" lengthAdjust="spacingAndGlyphs">NetP2_26</text>
<circle cx="1053.4" cy="466" r="8.8" fill="#c9d0d5"/><circle cx="1053.4" cy="466.5" r="6.2" fill="#cdeef2"/><text x="1053.4" y="462.2" class="pn">27</text><text x="1053.4" y="475" class="nn" textLength="15" lengthAdjust="spacingAndGlyphs">NetP2_27</text>
<circle cx="1083.2" cy="466" r="8.8" fill="#c9d0d5"/><circle cx="1083.2" cy="466.5" r="6.2" fill="#cdeef2"/><text x="1083.2" y="462.2" class="pn">28</text><text x="1083.2" y="475" class="nn" textLength="15" lengthAdjust="spacingAndGlyphs">NetP2_28</text>
<circle cx="1112.9" cy="466" r="8.8" fill="#c9d0d5"/><circle cx="1112.9" cy="466.5" r="6.2" fill="#cdeef2"/><text x="1112.9" y="462.2" class="pn">29</text><text x="1112.9" y="475" class="nn" textLength="15" lengthAdjust="spacingAndGlyphs">NetP2_29</text>
<circle cx="1142.7" cy="466" r="8.8" fill="#c9d0d5"/><circle cx="1142.7" cy="466.5" r="6.2" fill="#cdeef2"/><text x="1142.7" y="462.2" class="pn">30</text><text x="1142.7" y="475" class="nn" textLength="15" lengthAdjust="spacingAndGlyphs">NetP2_30</text>
<rect x="122.4" y="658.9" width="19" height="19" fill="#c3c1cb"/><circle cx="131.9" cy="669.4" r="5.5" fill="#c8e9ee"/><text x="131.9" y="664.6" class="pn">1</text><text x="131.9" y="677.4" class="nn" textLength="18" lengthAdjust="spacingAndGlyphs">NetP3_1</text>
<circle cx="161.6" cy="668.4" r="8.8" fill="#c9d0d5"/><circle cx="161.6" cy="668.9" r="6.2" fill="#cdeef2"/><text x="161.6" y="664.6" class="pn">2</text><text x="161.6" y="677.4" class="nn" textLength="15" lengthAdjust="spacingAndGlyphs">NetP3_2</text>
<circle cx="191.4" cy="668.4" r="8.8" fill="#c9d0d5"/><circle cx="191.4" cy="668.9" r="6.2" fill="#cdeef2"/><text x="191.4" y="664.6" class="pn">3</text><text x="191.4" y="677.4" class="nn" textLength="15" lengthAdjust="spacingAndGlyphs">NetP3_3</text>
<circle cx="221.1" cy="668.4" r="8.8" fill="#c9d0d5"/><circle cx="221.1" cy="668.9" r="6.2" fill="#cdeef2"/><text x="221.1" y="664.6" class="pn">4</text><text x="221.1" y="677.4" class="nn" textLength="15" lengthAdjust="spacingAndGlyphs">NetP3_4</text>
<circle cx="250.9" cy="668.4" r="8.8" fill="#c9d0d5"/><circle cx="250.9" cy="668.9" r="6.2" fill="#cdeef2"/><text x="250.9" y="664.6" class="pn">5</text><text x="250.9" y="677.4" class="nn" textLength="15" lengthAdjust="spacingAndGlyphs">NetP3_5</text>
<circle cx="280.6" cy="668.4" r="8.8" fill="#c9d0d5"/><circle cx="280.6" cy="668.9" r="6.2" fill="#cdeef2"/><text x="280.6" y="664.6" class="pn">6</text><text x="280.6" y="677.4" class="nn" textLength="15" lengthAdjust="spacingAndGlyphs">NetP3_6</text>
<circle cx="310.3" cy="668.4" r="8.8" fill="#c9d0d5"/><circle cx="310.3" cy="668.9" r="6.2" fill="#cdeef2"/><text x="310.3" y="664.6" class="pn">7</text><text x="310.3" y="677.4" class="nn" textLength="15" lengthAdjust="spacingAndGlyphs">NetP3_7</text>
<circle cx="340.1" cy="668.4" r="8.8" fill="#c9d0d5"/><circle cx="340.1" cy="668.9" r="6.2" fill="#cdeef2"/><text x="340.1" y="664.6" class="pn">8</text><text x="340.1" y="677.4" class="nn" textLength="15" lengthAdjust="spacingAndGlyphs">NetP3_8</text>
<circle cx="369.8" cy="668.4" r="8.8" fill="#c9d0d5"/><circle cx="369.8" cy="668.9" r="6.2" fill="#cdeef2"/><text x="369.8" y="664.6" class="pn">9</text><text x="369.8" y="677.4" class="nn" textLength="15" lengthAdjust="spacingAndGlyphs">NetP3_9</text>
<circle cx="399.6" cy="668.4" r="8.8" fill="#c9d0d5"/><circle cx="399.6" cy="668.9" r="6.2" fill="#cdeef2"/><text x="399.6" y="664.6" class="pn">10</text><text x="399.6" y="677.4" class="nn" textLength="15" lengthAdjust="spacingAndGlyphs">NetP3_10</text>
<circle cx="429.3" cy="668.4" r="8.8" fill="#c9d0d5"/><circle cx="429.3" cy="668.9" r="6.2" fill="#cdeef2"/><text x="429.3" y="664.6" class="pn">11</text><text x="429.3" y="677.4" class="nn" textLength="15" lengthAdjust="spacingAndGlyphs">NetP3_11</text>
<circle cx="459" cy="668.4" r="8.8" fill="#c9d0d5"/><circle cx="459" cy="668.9" r="6.2" fill="#cdeef2"/><text x="459" y="664.6" class="pn">12</text><text x="459" y="677.4" class="nn" textLength="15" lengthAdjust="spacingAndGlyphs">NetP3_12</text>
<circle cx="488.8" cy="668.4" r="8.8" fill="#c9d0d5"/><circle cx="488.8" cy="668.9" r="6.2" fill="#cdeef2"/><text x="488.8" y="664.6" class="pn">13</text><text x="488.8" y="677.4" class="nn" textLength="15" lengthAdjust="spacingAndGlyphs">NetP3_13</text>
<circle cx="518.5" cy="668.4" r="8.8" fill="#c9d0d5"/><circle cx="518.5" cy="668.9" r="6.2" fill="#cdeef2"/><text x="518.5" y="664.6" class="pn">14</text><text x="518.5" y="677.4" class="nn" textLength="15" lengthAdjust="spacingAndGlyphs">NetP3_14</text>
<circle cx="548.3" cy="668.4" r="8.8" fill="#c9d0d5"/><circle cx="548.3" cy="668.9" r="6.2" fill="#cdeef2"/><text x="548.3" y="664.6" class="pn">15</text><text x="548.3" y="677.4" class="nn" textLength="15" lengthAdjust="spacingAndGlyphs">NetP3_15</text>
<circle cx="578" cy="668.4" r="8.8" fill="#c9d0d5"/><circle cx="578" cy="668.9" r="6.2" fill="#cdeef2"/><text x="578" y="664.6" class="pn">16</text><text x="578" y="677.4" class="nn" textLength="15" lengthAdjust="spacingAndGlyphs">NetP3_16</text>
<circle cx="607.7" cy="668.4" r="8.8" fill="#c9d0d5"/><circle cx="607.7" cy="668.9" r="6.2" fill="#cdeef2"/><text x="607.7" y="664.6" class="pn">17</text><text x="607.7" y="677.4" class="nn" textLength="15" lengthAdjust="spacingAndGlyphs">NetP3_17</text>
<circle cx="637.5" cy="668.4" r="8.8" fill="#c9d0d5"/><circle cx="637.5" cy="668.9" r="6.2" fill="#cdeef2"/><text x="637.5" y="664.6" class="pn">18</text><text x="637.5" y="677.4" class="nn" textLength="15" lengthAdjust="spacingAndGlyphs">NetP3_18</text>
<circle cx="667.2" cy="668.4" r="8.8" fill="#c9d0d5"/><circle cx="667.2" cy="668.9" r="6.2" fill="#cdeef2"/><text x="667.2" y="664.6" class="pn">19</text><text x="667.2" y="677.4" class="nn" textLength="15" lengthAdjust="spacingAndGlyphs">NetP3_19</text>
<circle cx="697" cy="668.4" r="8.8" fill="#c9d0d5"/><circle cx="697" cy="668.9" r="6.2" fill="#cdeef2"/><text x="697" y="664.6" class="pn">20</text><text x="697" y="677.4" class="nn" textLength="15" lengthAdjust="spacingAndGlyphs">NetP3_20</text>
<circle cx="726.7" cy="668.4" r="8.8" fill="#c9d0d5"/><circle cx="726.7" cy="668.9" r="6.2" fill="#cdeef2"/><text x="726.7" y="664.6" class="pn">21</text><text x="726.7" y="677.4" class="nn" textLength="15" lengthAdjust="spacingAndGlyphs">NetP3_21</text>
<circle cx="756.4" cy="668.4" r="8.8" fill="#c9d0d5"/><circle cx="756.4" cy="668.9" r="6.2" fill="#cdeef2"/><text x="756.4" y="664.6" class="pn">22</text><text x="756.4" y="677.4" class="nn" textLength="15" lengthAdjust="spacingAndGlyphs">NetP3_22</text>
<circle cx="786.2" cy="668.4" r="8.8" fill="#c9d0d5"/><circle cx="786.2" cy="668.9" r="6.2" fill="#cdeef2"/><text x="786.2" y="664.6" class="pn">23</text><text x="786.2" y="677.4" class="nn" textLength="15" lengthAdjust="spacingAndGlyphs">NetP3_23</text>
<circle cx="815.9" cy="668.4" r="8.8" fill="#c9d0d5"/><circle cx="815.9" cy="668.9" r="6.2" fill="#cdeef2"/><text x="815.9" y="664.6" class="pn">24</text><text x="815.9" y="677.4" class="nn" textLength="15" lengthAdjust="spacingAndGlyphs">NetP3_24</text>
<circle cx="845.7" cy="668.4" r="8.8" fill="#c9d0d5"/><circle cx="845.7" cy="668.9" r="6.2" fill="#cdeef2"/><text x="845.7" y="664.6" class="pn">25</text><text x="845.7" y="677.4" class="nn" textLength="15" lengthAdjust="spacingAndGlyphs">NetP3_25</text>
<circle cx="875.4" cy="668.4" r="8.8" fill="#c9d0d5"/><circle cx="875.4" cy="668.9" r="6.2" fill="#cdeef2"/><text x="875.4" y="664.6" class="pn">26</text><text x="875.4" y="677.4" class="nn" textLength="15" lengthAdjust="spacingAndGlyphs">NetP3_26</text>
<circle cx="905.1" cy="668.4" r="8.8" fill="#c9d0d5"/><circle cx="905.1" cy="668.9" r="6.2" fill="#cdeef2"/><text x="905.1" y="664.6" class="pn">27</text><text x="905.1" y="677.4" class="nn" textLength="15" lengthAdjust="spacingAndGlyphs">NetP3_27</text>
<circle cx="934.9" cy="668.4" r="8.8" fill="#c9d0d5"/><circle cx="934.9" cy="668.9" r="6.2" fill="#cdeef2"/><text x="934.9" y="664.6" class="pn">28</text><text x="934.9" y="677.4" class="nn" textLength="15" lengthAdjust="spacingAndGlyphs">NetP3_28</text>
<circle cx="964.6" cy="668.4" r="8.8" fill="#c9d0d5"/><circle cx="964.6" cy="668.9" r="6.2" fill="#cdeef2"/><text x="964.6" y="664.6" class="pn">29</text><text x="964.6" y="677.4" class="nn" textLength="15" lengthAdjust="spacingAndGlyphs">NetP3_29</text>
<circle cx="994.4" cy="668.4" r="8.8" fill="#c9d0d5"/><circle cx="994.4" cy="668.9" r="6.2" fill="#cdeef2"/><text x="994.4" y="664.6" class="pn">30</text><text x="994.4" y="677.4" class="nn" textLength="15" lengthAdjust="spacingAndGlyphs">NetP3_30</text>
</g>
<g class="des">
<text x="-76.1" y="243.6">Designator1</text>
<text x="51.8" y="473">Designator2</text>
<text x="-88" y="677.2">Designator3</text>
</g>
</svg>
</div>
<div id="vs" class="abs"></div><div id="hs" class="abs"></div>
<div class="abs sbtn" style="left:1107px;top:84px"><svg width="15" height="15" viewBox="0 0 15 15" style="position:absolute;left:0;top:0"><path d="M4 9.5l3.5-3.5 3.5 3.5" fill="none" stroke="#4d6185" stroke-width="2.2"/></svg></div>
<div class="abs sbtn" style="left:1107px;top:786px"><svg width="15" height="15" viewBox="0 0 15 15" style="position:absolute;left:0;top:0"><path d="M4 6l3.5 3.5 3.5-3.5" fill="none" stroke="#4d6185" stroke-width="2.2"/></svg></div>
<div class="abs sbtn" style="left:1107px;top:748px"><svg width="15" height="15" viewBox="0 0 15 15" style="position:absolute;left:0;top:0"><path d="M4 4.5h7M4 6.5h7M4 8.5h7M4 10.5h7" stroke="#eef3fd" stroke-width="1"/><path d="M4 5.5h7M4 7.5h7M4 9.5h7" stroke="#8ea6dc" stroke-width="1"/></svg></div>
<div class="abs sbtn" style="left:28px;top:803px"><svg width="15" height="15" viewBox="0 0 15 15" style="position:absolute;left:0;top:0"><path d="M9.5 4l-3.5 3.5 3.5 3.5" fill="none" stroke="#4d6185" stroke-width="2.2"/></svg></div>
<div class="abs sbtn" style="left:1090px;top:803px"><svg width="15" height="15" viewBox="0 0 15 15" style="position:absolute;left:0;top:0"><path d="M6 4l3.5 3.5-3.5 3.5" fill="none" stroke="#4d6185" stroke-width="2.2"/></svg></div>
<div class="abs sbtn" style="left:87px;top:803px"><svg width="15" height="15" viewBox="0 0 15 15" style="position:absolute;left:0;top:0"><path d="M4.5 4v7M6.5 4v7M8.5 4v7M10.5 4v7" stroke="#eef3fd" stroke-width="1"/><path d="M5.5 4v7M7.5 4v7M9.5 4v7" stroke="#8ea6dc" stroke-width="1"/></svg></div>
<svg class="abs" style="left:0;top:820px" width="600" height="20" viewBox="0 0 600 20"><path d="M389 .5l6 15.5h55l6-15.5" fill="#fff" stroke="#222" stroke-width="1"/><path d="M306 .5l6 15.5h75l6-15.5" fill="#fff" stroke="#222" stroke-width="1"/><path d="M239 .5l6 15.5h59l6-15.5" fill="#fff" stroke="#222" stroke-width="1"/><path d="M166 .5l6 15.5h65l6-15.5" fill="#fff" stroke="#222" stroke-width="1"/><path d="M95 .5l6 15.5h63l6-15.5" fill="#fff" stroke="#222" stroke-width="1"/><path d="M37 .5l6 15.5h50l6-15.5" fill="#ece9d8" stroke="#222" stroke-width="1"/><text x="42.5" y="12.5" font-family="Liberation Sans,sans-serif" font-size="11" fill="#222" textLength="46.5" lengthAdjust="spacingAndGlyphs">Top Layer</text><text x="100" y="12.5" font-family="Liberation Sans,sans-serif" font-size="11" fill="#222" textLength="61" lengthAdjust="spacingAndGlyphs">Bottom Layer</text><text x="172.5" y="12.5" font-family="Liberation Sans,sans-serif" font-size="11" fill="#222" textLength="61" lengthAdjust="spacingAndGlyphs">Mechanical 1</text><text x="245" y="12.5" font-family="Liberation Sans,sans-serif" font-size="11" fill="#222" textLength="55" lengthAdjust="spacingAndGlyphs">Top Overlay</text><text x="311" y="12.5" font-family="Liberation Sans,sans-serif" font-size="11" fill="#222" textLength="72.5" lengthAdjust="spacingAndGlyphs">Keep-Out Layer</text><text x="395" y="12.5" font-family="Liberation Sans,sans-serif" font-size="11" fill="#222" textLength="48.5" lengthAdjust="spacingAndGlyphs">Multi-Layer</text></svg>
<div class="abs bb" style="left:991px;width:31px"><svg width="31" height="17" viewBox="0 0 31 17" style="position:absolute;left:0;top:0"><circle cx="5.5" cy="5" r="2.3" fill="#f4e86a" stroke="#555" stroke-width=".8"/><circle cx="5.5" cy="11.5" r="2.3" fill="#f4e86a" stroke="#555" stroke-width=".8"/><path d="M12 4.5l4.5 4-4.5 4z" fill="#777"/><path d="M18.5 4.5h9l-3.5 4v4.5h-2v-4.5z" fill="#fff" stroke="#333" stroke-width="1.2"/></svg></div>
<div class="abs bb" style="left:1025px;width:60px">屏蔽程度</div>
<div class="abs bb" style="left:1089px;width:33px">清除</div>
<div id="status" class="abs"></div>
<div class="abs st" style="left:5px"><span class="tx" style="transform:scaleX(.947)">X:3740mil Y:4330mil</span></div><div class="abs st" style="left:111px"><span class="tx" style="transform:scaleX(.93)">Grid:5mil</span></div>
<div class="abs" style="left:292px;top:843px;width:1px;height:17px;background:#c9c6b6"></div>
<div class="abs sp" style="left:833px;width:46px"><span class="tx"><u>S</u>ystem</span></div>
<div class="abs sp" style="left:880px;width:89px"><span class="tx"><u>D</u>esign Compiler</span></div>
<div class="abs sp" style="left:970px;width:41px"><span class="tx">Help</span></div>
<div class="abs sp" style="left:1012px;width:68px"><span class="tx"><u>I</u>nstruments</span></div>
<div class="abs sp" style="left:1081px;width:43px"><span class="tx"><u>P</u>CB</span></div>
<div class="abs sp" style="left:1125px;width:5px"></div>
<div class="abs sp" style="left:1131px;width:15px;border:1px solid #d6d3c4;top:842px">&gt;&gt;</div>
<div id="bline" class="abs"></div>
</body>
</html>
